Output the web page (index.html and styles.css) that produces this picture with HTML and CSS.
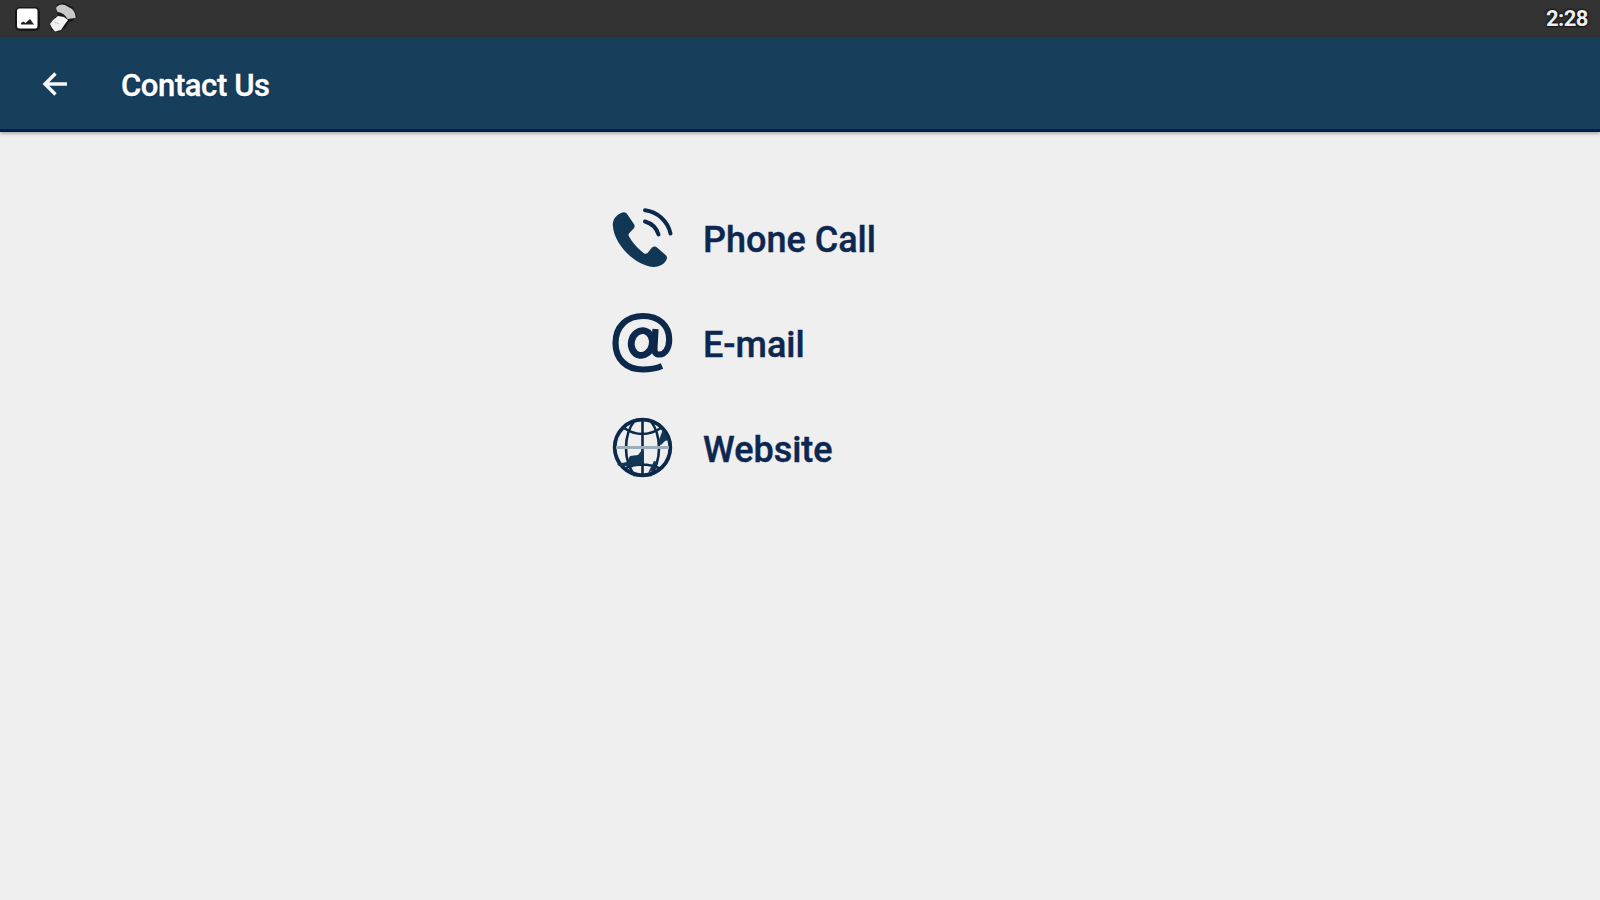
FILE: index.html
```
<!DOCTYPE html>
<html lang="en">
    <head>
        <meta charset="utf-8">
        <meta name="viewport" content="width=device-width, initial-scale=1">
        <title>Contact Us</title>
        <link rel="stylesheet" href="styles.css">
    </head>
    <body>
        <div class="statusbar">
            <svg class="notif" width="66" height="36" viewBox="0 0 66 36">
                <rect class="edge" x="2" y="8" width="23" height="22" rx="4"/>
                <rect x="3" y="8.500" width="20.500" height="20" rx="2.500" fill="#fff"/>
                <path d="M7 24.500v-1.500l2.500-1.500 2 1.500 4.500-4 4 5.500z" fill="#222"/>
                <path class="edge" d="M44 5l6-1 8 4 4 8-4 4-4 1-3 6-6 4-7-2-1-5 5-6 5-1-3-4z"/>
                <path d="M42 8q3-5 9-3l7 4q4 4 3.500 9l-8 1q-3-6-10-7z" fill="#c8c8c8"/>
                <path d="M44 16l6 1 4 3-3 4-4 6-6 1.500-3-3.500-2-4 3-4z" fill="#f2f2f2"/>
                <path d="M40 22l5 2" stroke="#c4c4c4" fill="none"/>
            </svg>
            <span class="clock">2:28</span>
        </div>
        <div class="toolbar">
            <svg class="back" width="26" height="26" viewBox="0 0 26 26">
                <path d="M25 13H3M13.500 2.500L3 13l10.500 10.500"/>
            </svg>
            <h1>Contact Us</h1>
        </div>

        <div class="contacts">
            <div class="contact">
                <svg class="icon" viewBox="0 0 60 60">
                    <path d="M10.500 4.500C5 6 .5 11 .8 17.500 2 36 22 57 41 59c6 .4 13-3.500 14-9 0-1.500-.8-2.600-2-3.500l-8-7c-1.500-1.300-3.500-1.300-5 0l-4.500 5.500c-1 1-2.500 1-3.500.2C26 41 20 34 16.800 28c-.6-1-.3-2 .4-2.800l4.500-4.700c1.200-1.300 1.200-3 .2-4.500l-6.500-9.500c-1.300-2-2.900-2.600-4.900-2z"/>
                    <g class="line">
                        <path stroke-width="4" stroke-linecap="round" d="M33 2.200C45 3.500 56 13 58.500 25.500"/>
                        <path stroke-width="4" stroke-linecap="round" d="M33 13.500C40 15.500 44.500 20 46.500 26.500"/>
                    </g>
                </svg>
                <span>Phone Call</span>
            </div>
            <div class="contact">
                <svg class="icon" viewBox="0 0 60 60">
                    <g class="line">
                        <path stroke-width="6.200" d="M50 53C44 55.500 38 56.500 31 56.500 14 56.500 3.500 46 3.500 30 3.500 13.500 15 3 31 3c16 0 26.200 9.500 26.200 23.500C57.200 35.500 53 41.500 47.500 41.500c-4.500 0-5.500-3-5-7.500L43.500 16"/>
                        <ellipse stroke-width="6.800" cx="29.800" cy="30" rx="10.500" ry="12.500" transform="rotate(12 29.800 30)"/>
                    </g>
                </svg>
                <span>E-mail</span>
            </div>
            <div class="contact">
                <svg class="icon" viewBox="0 0 60 60">
                    <g class="line">
                        <circle stroke-width="3.800" cx="30.500" cy="29.500" r="27.800"/>
                        <path stroke-width="2.600" d="M30.500 2v56M12 10q18 12 37 0M12 51q18-9 37 0"/>
                        <path stroke-width="2.600" d="M23 2C11 17 11 43 23 58M38 2C50 17 50 43 38 58"/>
                        <path class="equator" stroke-width="3" d="M4 29.500h53"/>
                    </g>
                    <path d="M5 46l10-2 3-6 8-1 4-5 2 2v12l-9 2H7z"/>
                    <path d="M51 11l6 11-4 1-4 4-3-2z"/>
                    <path d="M42 43l4 1-5 8-5 3z"/>
                </svg>
                <span>Website</span>
            </div>
        </div>
    </body>
</html>
```
FILE: styles.css
```
html, body { height: 100%; margin: 0; padding: 0; overflow: hidden; }
body {
    background-color: #efefef;
    color: #0d2750;
    font-family: Roboto, "Liberation Sans", sans-serif;
    font-weight: 500;
}
.statusbar {
    height: 37px;
    display: flex;
    align-items: flex-start;
    justify-content: space-between;
    padding: 0 12px 0 14px;
    background-color: #333;
    box-sizing: border-box;
}
.notif { display: block; }
.edge { fill: #171717; stroke: #171717; stroke-width: 2; }
.clock {
    color: #eee;
    font-size: 22px;
    font-weight: 700;
    line-height: 38px;
    letter-spacing: -0.5px;
    text-shadow: 0 0 3px #000, 0 0 2px #000;
}
.toolbar {
    height: 95px;
    display: flex;
    align-items: center;
    padding-left: 42px;
    background-color: #173e5b;
    border-bottom: 3px solid #00204c;
    box-sizing: border-box;
    box-shadow: 0 1px 4px rgba(0, 0, 0, 0.4);
}
.back { margin-top: 2px; fill: none; stroke: #f4f6f8; stroke-width: 3.4; }
.toolbar h1 {
    margin: 5px 0 0 53px;
    color: #fff;
    font-size: 31px;
    font-weight: 500;
    line-height: 40px;
    letter-spacing: -0.4px;
    -webkit-text-stroke: 0.4px #fff;
    text-shadow: 0 0 2px #001c48;
}
.contacts {
    display: flex;
    flex-direction: column;
    gap: 45px;
    padding: 76px 0 0 612px;
}
.contact {
    height: 60px;
    display: flex;
    align-items: center;
    gap: 31px;
    font-size: 36px;
    line-height: 60px;
    -webkit-text-stroke: 0.4px #0d2750;
}
.contact span { padding-top: 3px; }
.icon { width: 60px; height: 60px; overflow: visible; fill: #123754; }
.line { fill: none; stroke: #0c294c; }
.equator { stroke: #9aaebb; }
```
